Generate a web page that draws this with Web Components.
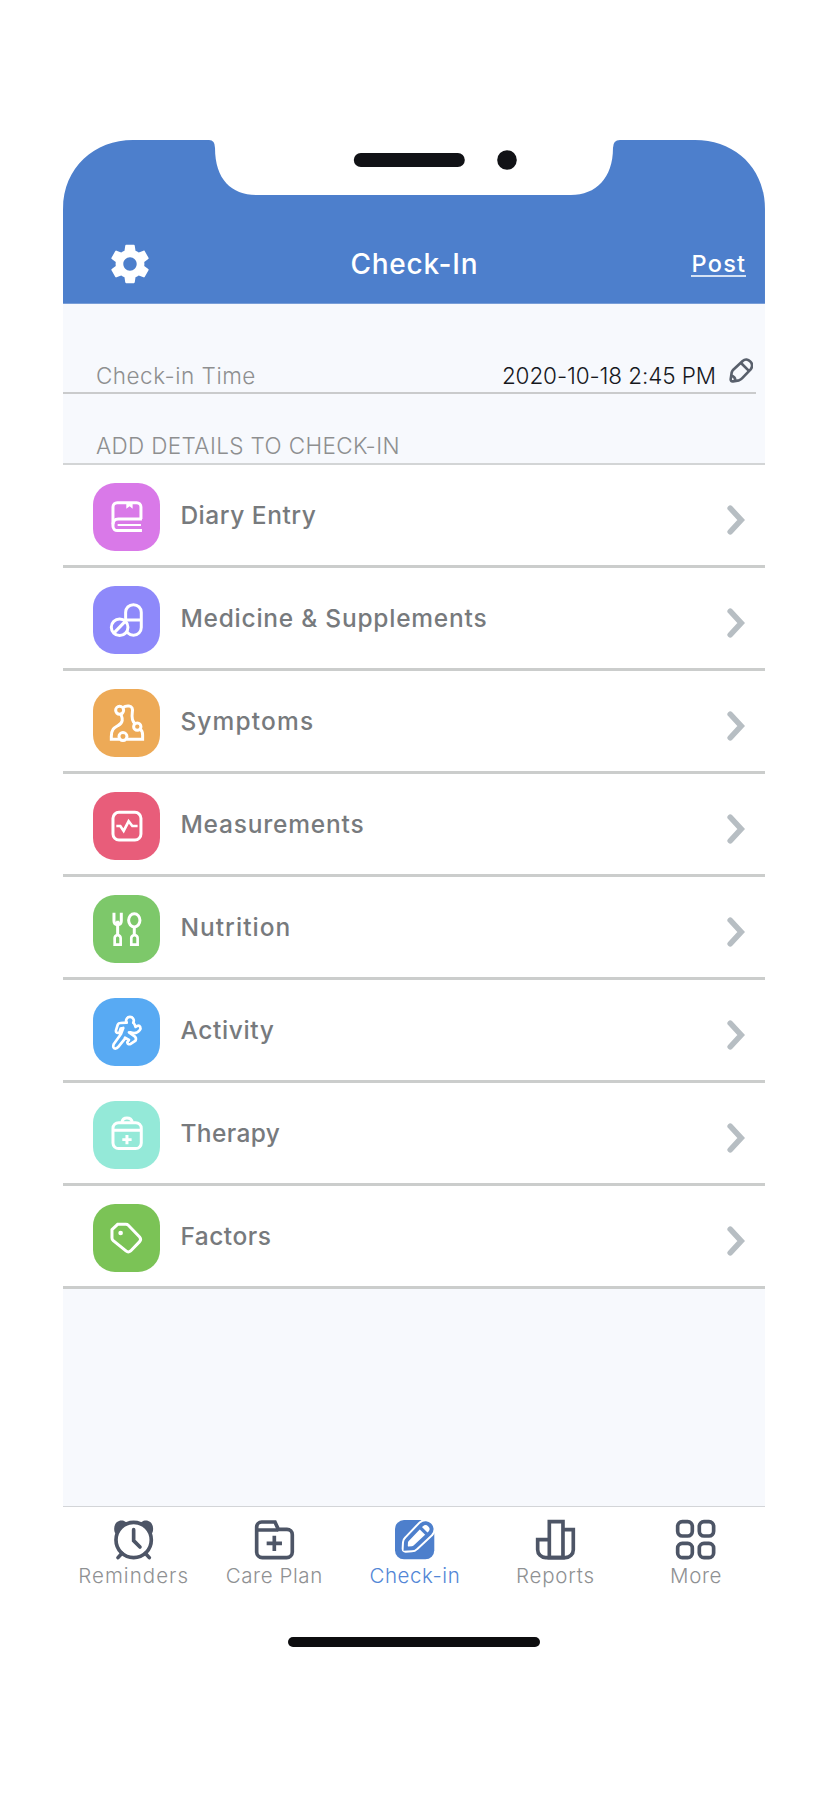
<!DOCTYPE html>
<html lang="en">
<head>
<meta charset="utf-8">
<title>Check-In</title>
<style>
  body {
    margin: 0;
    background: #fff;
    font-family: Inter, "Open Sans", "Liberation Sans", sans-serif;
  }
</style>
</head>
<body>
<phone-screen>
  <app-header slot="header" heading="Check-In" action="Post"></app-header>

  <time-row label="Check-in Time" value="2020-10-18 2:45 PM"></time-row>
  <section-title>ADD DETAILS TO CHECK-IN</section-title>

  <entry-row icon="diary" color="#d979e8" fit="134">Diary Entry</entry-row>
  <entry-row icon="medicine" color="#8e89fa" fit="305">Medicine &amp; Supplements</entry-row>
  <entry-row icon="symptoms" color="#edaa57" fit="132">Symptoms</entry-row>
  <entry-row icon="measure" color="#e85d7a" fit="182">Measurements</entry-row>
  <entry-row icon="nutrition" color="#7dc86a" fit="109">Nutrition</entry-row>
  <entry-row icon="activity" color="#58aaf3" fit="92">Activity</entry-row>
  <entry-row icon="therapy" color="#94e9d8" fit="98">Therapy</entry-row>
  <entry-row icon="factors" color="#7bc356" fit="89">Factors</entry-row>

  <tab-bar slot="footer">
    <tab-item icon="reminders" fit="109">Reminders</tab-item>
    <tab-item icon="care" fit="95">Care Plan</tab-item>
    <tab-item icon="checkin" fit="89" active>Check-in</tab-item>
    <tab-item icon="reports" fit="77">Reports</tab-item>
    <tab-item icon="more" fit="50">More</tab-item>
  </tab-bar>
</phone-screen>

<script>
// Tile icons live on a 203 x 203 grid, white strokes on the tile colour
const TILE_ICONS = {
  diary: `
    <path d="M144 108V72a13 13 0 0 0-13-13H73a13 13 0 0 0-13 13v58a13 13 0 0 0 13 13h74"/>
    <path d="M147 108H76q-16 0-16 16"/>
    <path d="M74 126h70" stroke-width="6"/>
    <path d="M100 59v18l10-7 9 7V59z" fill="#fff" stroke="none"/>`,
  medicine: `
    <rect x="98" y="56" width="47" height="92" rx="23"/>
    <path d="M99 102h46"/>
    <circle cx="80" cy="124" r="25" fill="var(--tile)"/>
    <path d="M64 140l32-33"/>`,
  symptoms: `
    <path d="M91 55q6-5 17-4c10 1 12 9 10 20-2 14-2 24 8 33"/>
    <path d="M142 121q7 5 7 17v13h-48M79 151H55v-8c0-22 8-26 20-33 17-9 14-21 9-34"/>
    <circle cx="80" cy="64" r="12"/>
    <circle cx="133" cy="113" r="11"/>
    <circle cx="90" cy="143" r="12"/>`,
  measure: `
    <rect x="60" y="61" width="84" height="83" rx="18"/>
    <path d="M70 102h12l10 15 15-29 11 14h16" stroke-width="8"/>`,
  nutrition: `
    <path d="M63 53v25q0 10 11 11 11-1 11-11V53M74 77v43"/>
    <path d="M65 149v-20q0-7 9-9 9 2 9 9v20zM115 149v-20q0-7 10-9 9 2 9 9v20z" stroke-width="8"/>
    <ellipse cx="124" cy="76" rx="17" ry="20"/>
    <path d="M124 97v22"/>`,
  activity: `
    <g stroke-width="8" stroke-linecap="round" stroke-linejoin="round">
      <path d="M101 74a11.500 11.500 0 1 1 20 0"/>
      <path d="M101 74l-19 1q-6 0-8 6l-5 16q-1 8 6 8 5 0 6-6l2-7 8-2-7 18-22 31q-4 12 5 13 5 0 9-5l20-25"/>
      <path d="M121 74q4 4 7 13l5-3c8-3 13 6 7 13q-10 13-28 6"/>
      <path d="M108 103l17 12q6 5 3 13l-15 10q-9 3-10-5l5-7-12-7"/>
    </g>`,
  therapy: `
    <rect x="60" y="65" width="85" height="78" rx="17"/>
    <path d="M60 88h85M87 63q2-12 15-12t16 12"/>
    <path d="M102 102v28M88 116h28"/>`,
  factors: `
    <path d="M57 77l17-16h25q4 0 7 3l34 35q6 7 0 14l-27 28q-7 6-14 0L60 109q-3-3-3-8z"/>
    <circle cx="83" cy="87" r="7" fill="#fff" stroke="none"/>`
};

// Tab icons use a 118 x 118 grid
const TAB_ICONS = {
  reminders: `
    <path d="M2 37C-4 15 9-3 29 2l10 6L7 43zM116 37c6-22-7-40-27-35L79 8l32 35z" fill="currentColor" stroke="none"/>
    <circle cx="59" cy="60" r="53" fill="#fff"/>
    <path d="M59 29v33l19 19M12 113l12-13M106 113l-12-13" stroke-linecap="round"/>`,
  care: `
    <path d="M5 96V21A15 15 0 0 1 20 6h40l10 22h26a16 16 0 0 1 16 16v52a17 17 0 0 1-17 17H22A17 17 0 0 1 5 96z"/>
    <path d="M5 30h65M58 47v46M35 70h46"/>`,
  checkin: `
    <path d="M27 0h52l39 39v52a27 27 0 0 1-27 27H27A27 27 0 0 1 0 91V27A27 27 0 0 1 27 0z" fill="currentColor" stroke="none"/>
    <path id="pencil" d="M32 86l1-19q0-4 4-8l43-45c16-14 40 8 25 25L60 81q-4 4-9 4z" stroke="#fff" stroke-width="24" stroke-linejoin="round"/>
    <path d="M32 86l1-19q0-4 4-8l43-45c16-14 40 8 25 25L60 81q-4 4-9 4z" fill="#fff" stroke-width="12"/>
    <path d="M75 22l22 22" stroke-width="10"/>`,
  reports: `
    <path d="M38 59H5v30a24 24 0 0 0 24 24h59a24 24 0 0 0 24-24V29H81"/>
    <path d="M40 113V5h41v108z"/>`,
  more: `
    <rect x="5" y="5" width="44" height="43" rx="14"/>
    <rect x="70" y="5" width="43" height="43" rx="14"/>
    <rect x="5" y="70" width="44" height="43" rx="14"/>
    <rect x="70" y="70" width="43" height="43" rx="14"/>`
};

/**
 * FitText - single line label that is tracked out to a given width
 */
class FitText extends HTMLElement {
  constructor() {
    super();
    this.attachShadow({ mode: 'open' });
  }

  connectedCallback() {
    this.shadowRoot.innerHTML = `
      <style>
        :host { display: inline-block; white-space: nowrap; }
        span { display: inline-block; }
      </style>
      <span><slot></slot></span>
    `;
    const span = this.shadowRoot.querySelector('span');
    const target = parseFloat(this.getAttribute('width'));
    const count = this.textContent.trim().length;
    const natural = span.getBoundingClientRect().width;
    if (target && natural && count > 1) {
      const space = (target + 2 - natural) / count;
      span.style.letterSpacing = space.toFixed(3) + 'px';
    }
  }
}

class AppHeader extends HTMLElement {
  constructor() {
    super();
    this.attachShadow({ mode: 'open' });
  }

  connectedCallback() {
    this.shadowRoot.innerHTML = `
      <style>
        :host { display: grid; height: 163.7px; color: #fff; }
        .shape, .bar { grid-area: 1 / 1; }
        .shape { display: block; }
        .bar {
          display: grid;
          grid-template-columns: 1fr auto 1fr;
          align-items: center;
          height: 46px;
          margin-top: 100.5px;
          padding: 0 19px;
        }
        .gear { display: block; margin: 0.5px 0 -0.5px 24.5px; }
        .heading { font-size: 28px; line-height: 34px; font-weight: 500; }
        .action {
          justify-self: end;
          box-sizing: border-box;
          height: 28px;
          margin-bottom: 2px;
          border-bottom: 2px solid #d5e2f4;
          font-size: 23.5px;
          line-height: 30px;
          font-weight: 500;
        }
      </style>
      <svg class="shape" width="702" height="163.7" viewBox="0 0 702 163.7">
        <path fill="#4d7fcc" d="M0 163.7V69C0 27 32 0 70 0h76q6 0 6 8c0 32 17 47 42 47h314c25 0 42-17 42-47q0-8 7-8h75c40 0 70 28 70 69v94.7z"/>
        <rect x="290.8" y="13" width="111" height="14" rx="7" fill="#111216"/>
        <circle cx="444" cy="20" r="9.8" fill="#111216"/>
      </svg>
      <div class="bar">
        <svg class="gear" width="46" height="46" viewBox="0 0 24 24" fill="#fff">
          <path d="M19.43 12.98c.04-.32.07-.64.07-.98s-.03-.66-.07-.98l2.11-1.65c.19-.15.24-.42.12-.64l-2-3.46c-.12-.22-.39-.3-.61-.22l-2.49 1c-.52-.4-1.08-.73-1.69-.98l-.38-2.65C14.46 2.18 14.25 2 14 2h-4c-.25 0-.46.18-.49.42l-.38 2.65c-.61.25-1.17.59-1.69.98l-2.49-1c-.23-.09-.49 0-.61.22l-2 3.46c-.13.22-.07.49.12.64l2.11 1.65c-.04.32-.07.65-.07.98s.03.66.07.98l-2.11 1.65c-.19.15-.24.42-.12.64l2 3.46c.12.22.39.3.61.22l2.49-1c.52.4 1.08.73 1.69.98l.38 2.65c.03.24.24.42.49.42h4c.25 0 .46-.18.49-.42l.38-2.65c.61-.25 1.17-.59 1.69-.98l2.49 1c.23.09.49 0 .61-.22l2-3.46c.12-.22.07-.49-.12-.64l-2.11-1.65zM12 15.5c-1.93 0-3.5-1.57-3.5-3.5s1.57-3.5 3.5-3.5 3.5 1.57 3.5 3.5-1.57 3.5-3.5 3.5z"/>
        </svg>
        <fit-text class="heading" width="126">${this.getAttribute('heading')}</fit-text>
        <fit-text class="action" width="53">${this.getAttribute('action')}</fit-text>
      </div>
    `;
  }
}

class TimeRow extends HTMLElement {
  constructor() {
    super();
    this.attachShadow({ mode: 'open' });
  }

  connectedCallback() {
    this.shadowRoot.innerHTML = `
      <style>
        :host {
          display: flex;
          align-items: flex-end;
          box-sizing: border-box;
          height: 90.3px;
          margin-right: 9px;
          padding: 0 3.5px 2.3px 32.5px;
          border-bottom: 2px solid #cacbcc;
          font-size: 22.5px;
          line-height: 28px;
        }
        .label { color: #8e8f90; font-weight: 300; }
        .value { margin-left: auto; color: #16181d; font-weight: 350; }
        svg { margin: 0 0 6.5px 13px; }
      </style>
      <fit-text class="label" width="158">${this.getAttribute('label')}</fit-text>
      <fit-text class="value" width="212">${this.getAttribute('value')}</fit-text>
      <svg width="24" height="25" viewBox="0 0 72 75" fill="none" stroke="#59606c" stroke-width="8" stroke-linejoin="round">
        <path d="M5 64L8 44q1-4 4-8l29-27c15-13 37 8 24 25L39 61q-4 4-9 6l-18 3q-7 1-7-6z"/>
        <path d="M36 15l23 23M6 53q12 2 13 14"/>
      </svg>
    `;
  }
}

class SectionTitle extends HTMLElement {
  constructor() {
    super();
    this.attachShadow({ mode: 'open' });
  }

  connectedCallback() {
    this.shadowRoot.innerHTML = `
      <style>
        :host {
          display: flex;
          align-items: flex-end;
          box-sizing: border-box;
          height: 71px;
          padding: 0 0 3.3px 32.5px;
          border-bottom: 2px solid #d3d5d6;
          color: #8e8f90;
          font-size: 22.5px;
          line-height: 28px;
          font-weight: 300;
        }
      </style>
      <fit-text width="302">${this.textContent}</fit-text>
    `;
  }
}

class EntryRow extends HTMLElement {
  constructor() {
    super();
    this.attachShadow({ mode: 'open' });
  }

  connectedCallback() {
    const icon = TILE_ICONS[this.getAttribute('icon')];
    this.shadowRoot.innerHTML = `
      <style>
        :host {
          display: flex;
          align-items: flex-start;
          box-sizing: border-box;
          height: 103.05px;
          padding: 18.1px 20.2px 0 29.4px;
          background: #fff;
          border-bottom: 3px solid #cbcdcc;
          --tile: ${this.getAttribute('color')};
        }
        .tile {
          width: 67.6px;
          height: 67.6px;
          border-radius: 22px;
          background: var(--tile);
        }
        .label {
          margin: 16.5px 0 0 20px;
          color: #777a7d;
          font-size: 24.5px;
          line-height: 30px;
          font-weight: 500;
        }
        .chevron { margin: 22px 0 0 auto; }
      </style>
      <svg class="tile" viewBox="0 0 203 203" fill="none" stroke="#fff" stroke-width="9">${icon}</svg>
      <fit-text class="label" width="${this.getAttribute('fit')}">${this.innerHTML}</fit-text>
      <svg class="chevron" width="18" height="30" viewBox="0 0 18 30" fill="none" stroke="#b7bec3" stroke-width="5.6">
        <path d="M3.2 3.2L14.2 15L3.2 26.8" stroke-linecap="round"/>
      </svg>
    `;
  }
}

class TabItem extends HTMLElement {
  constructor() {
    super();
    this.attachShadow({ mode: 'open' });
  }

  connectedCallback() {
    const active = this.hasAttribute('active');
    this.shadowRoot.innerHTML = `
      <style>
        :host {
          display: flex;
          flex-direction: column;
          align-items: center;
          gap: 4.5px;
          color: ${active ? '#5286d6' : '#8f9193'};
          font-size: 20.5px;
          line-height: 24px;
          font-weight: 300;
        }
        svg { display: block; overflow: visible; color: ${active ? '#4d7fcc' : '#4d5566'}; }
      </style>
      <svg width="39.3" height="39.3" viewBox="0 0 118 118" fill="none" stroke="currentColor" stroke-width="11">
        ${TAB_ICONS[this.getAttribute('icon')]}
      </svg>
      <fit-text width="${this.getAttribute('fit')}">${this.textContent}</fit-text>
    `;
  }
}

class TabBar extends HTMLElement {
  constructor() {
    super();
    this.attachShadow({ mode: 'open' });
    this.shadowRoot.innerHTML = `
      <style>
        :host { display: block; border-top: 1px solid #d3d5d8; background: #fff; }
        nav { display: grid; grid-template-columns: repeat(5, 140.6px); padding-top: 13px; }
        .home {
          width: 252px;
          height: 9.6px;
          margin: 49.5px auto 0;
          border-radius: 5px;
          background: #0d0d0f;
        }
      </style>
      <nav><slot></slot></nav>
      <div class="home"></div>
    `;
  }
}

class PhoneScreen extends HTMLElement {
  constructor() {
    super();
    this.attachShadow({ mode: 'open' });
    this.shadowRoot.innerHTML = `
      <style>
        :host {
          display: block;
          box-sizing: border-box;
          width: 831px;
          height: 1800px;
          padding: 140px 65.6px 0 63.4px;
        }
        main { height: 1202.3px; background: #f7f9fd; }
      </style>
      <slot name="header"></slot>
      <main><slot></slot></main>
      <slot name="footer"></slot>
    `;
  }
}

customElements.define('fit-text', FitText);
customElements.define('app-header', AppHeader);
customElements.define('time-row', TimeRow);
customElements.define('section-title', SectionTitle);
customElements.define('entry-row', EntryRow);
customElements.define('tab-item', TabItem);
customElements.define('tab-bar', TabBar);
customElements.define('phone-screen', PhoneScreen);
</script>
</body>
</html>
